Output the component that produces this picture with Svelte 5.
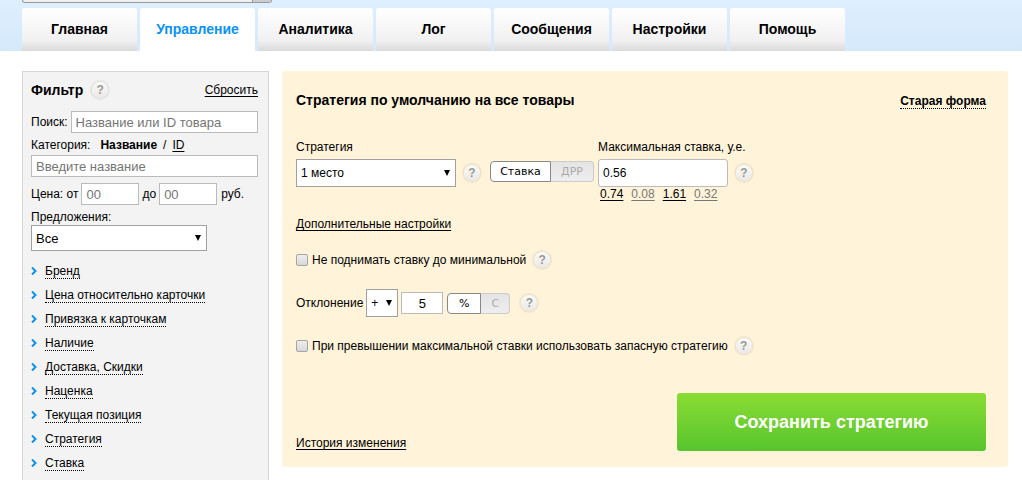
<script lang="ts">
  const tabs = ['Главная', 'Управление', 'Аналитика', 'Лог', 'Сообщения', 'Настройки', 'Помощь'];
  const sections = [
    'Бренд',
    'Цена относительно карточки',
    'Привязка к карточкам',
    'Наличие',
    'Доставка, Скидки',
    'Наценка',
    'Текущая позиция',
    'Стратегия',
    'Ставка',
  ];
  const hints = [
    { value: '0.74', muted: false },
    { value: '0.08', muted: true },
    { value: '1.61', muted: false },
    { value: '0.32', muted: true },
  ];

  let active = $state('Управление');
  let mode = $state('rate');
  let unit = $state('percent');
  let bid = $state('0.56');
  let deviation = $state('5');
</script>

{#snippet help()}
  <button class="help" type="button" aria-label="Справка">?</button>
{/snippet}

<div class="page">
  <header>
    <div class="account"><span class="account-arrow"></span></div>
    <nav>
      {#each tabs as tab}
        <a href="#top" class:active={tab === active} onclick={() => (active = tab)}>{tab}</a>
      {/each}
    </nav>
  </header>

  <div class="layout">
    <aside>
      <div class="filter-head">
        <h2>Фильтр</h2>
        {@render help()}
        <a class="reset" href="#reset">Сбросить</a>
      </div>
      <div class="row">
        <label for="search">Поиск:</label>
        <input id="search" class="grow" type="text" placeholder="Название или ID товара" />
      </div>
      <div class="category">
        <label for="category">Категория:</label>
        <b>Название</b>
        <span>/</span>
        <a href="#id">ID</a>
      </div>
      <div class="row">
        <input id="category" class="grow" type="text" placeholder="Введите название" />
      </div>
      <div class="row price">
        <label for="from">Цена: от</label>
        <input id="from" type="text" placeholder="00" />
        <label for="to">до</label>
        <input id="to" type="text" placeholder="00" />
        <span>руб.</span>
      </div>
      <label class="offers-label" for="offers">Предложения:</label>
      <span class="select offers">
        <select id="offers">
          <option>Все</option>
        </select>
      </span>
      <ul>
        {#each sections as section}
          <li>
            <svg width="6" height="8" viewBox="0 0 6 8" aria-hidden="true">
              <path d="M1 0.5 L4.5 4 L1 7.5" fill="none" stroke="#0a93f5" stroke-width="2" />
            </svg>
            <a class="dotted" href="#section">{section}</a>
          </li>
        {/each}
      </ul>
    </aside>

    <main>
      <div class="title">
        <h1>Стратегия по умолчанию на все товары</h1>
        <a class="dotted old-form" href="#old">Старая форма</a>
      </div>

      <div class="fields">
        <label class="strategy-label" for="strategy">Стратегия</label>
        <label class="bid-label" for="bid">Максимальная ставка, у.е.</label>
        <span class="select strategy">
          <select id="strategy">
            <option>1 место</option>
          </select>
        </span>
        {@render help()}
        <div class="toggle">
          <button type="button" class:on={mode === 'rate'} onclick={() => (mode = 'rate')}>Ставка</button>
          <button type="button" class:on={mode === 'share'} onclick={() => (mode = 'share')}>ДРР</button>
        </div>
        <input id="bid" class="bid" type="text" bind:value={bid} />
        {@render help()}
        <div class="hints">
          {#each hints as hint}
            <a href="#bid" class:muted={hint.muted} onclick={() => (bid = hint.value)}>{hint.value}</a>
          {/each}
        </div>
      </div>

      <div class="extra"><a href="#extra">Дополнительные настройки</a></div>

      <div class="option">
        <label><input type="checkbox" />Не поднимать ставку до минимальной</label>
        {@render help()}
      </div>

      <div class="option deviation">
        <label for="deviation">Отклонение</label>
        <span class="select sign">
          <select aria-label="Знак">
            <option>+</option>
            <option>-</option>
          </select>
        </span>
        <input id="deviation" type="text" bind:value={deviation} />
        <div class="toggle small">
          <button type="button" class:on={unit === 'percent'} onclick={() => (unit = 'percent')}>%</button>
          <button type="button" class:on={unit === 'c'} onclick={() => (unit = 'c')}>С</button>
        </div>
        {@render help()}
      </div>

      <div class="option">
        <label><input type="checkbox" />При превышении максимальной ставки использовать запасную стратегию</label>
        {@render help()}
      </div>

      <footer>
        <a href="#history">История изменения</a>
        <button class="save" type="button">Сохранить стратегию</button>
      </footer>
    </main>
  </div>
</div>

<style>
  :global(body) {
    background: #fff;
  }

  .page {
    display: flex;
    flex-direction: column;
    min-height: 100vh;
    font: 12px/16px 'Liberation Sans', Arial, sans-serif;
    color: #000;
  }

  .page :global(*) {
    box-sizing: border-box;
  }

  a {
    color: #000;
    text-underline-offset: 2px;
  }

  h1,
  h2 {
    margin: 0;
    font-size: 14px;
    line-height: 18px;
  }

  header {
    padding: 0 22px;
    background: linear-gradient(#deeffe, #d5e9fb);
  }

  .account {
    display: flex;
    justify-content: flex-end;
    width: 250px;
    height: 3px;
    margin-bottom: 5px;
    border: 1px solid #999;
    border-top: 0;
    border-radius: 0 0 3px 3px;
    background: #f0f0f0;
  }

  .account-arrow {
    width: 19px;
    border-left: 1px solid #999;
    background: #ccc;
  }

  nav {
    display: flex;
    gap: 3px;
  }

  nav a {
    width: 115px;
    border-radius: 3px 3px 0 0;
    background: linear-gradient(#fff, #f1f1f1 75%, #dadada);
    font-size: 14px;
    font-weight: bold;
    line-height: 43px;
    text-align: center;
    text-decoration: none;
  }

  nav a.active {
    background: #fff;
    color: #0a93f5;
  }

  .layout {
    display: flex;
    flex: 1;
    gap: 13px;
    padding: 20px 14px 0 22px;
  }

  aside {
    flex: none;
    width: 247px;
    padding: 8px 10px 0 8px;
    border: 1px solid #d6d6d6;
    border-bottom: 0;
    background: #f3f3f3;
  }

  .filter-head {
    display: flex;
    align-items: center;
    height: 20px;
    margin-bottom: 11px;
  }

  .filter-head h2 {
    margin-right: 7px;
  }

  .reset {
    margin-left: auto;
  }

  .row {
    display: flex;
    align-items: center;
    gap: 3px;
  }

  input,
  select {
    height: 22px;
    margin: 0;
    padding: 0 4px;
    border: 1px solid #bbb;
    border-radius: 0;
    background: #fff;
    color: #000;
    font: 13px 'Liberation Sans', Arial, sans-serif;
  }

  input::placeholder {
    color: #757575;
  }

  .grow {
    flex: 1;
    min-width: 0;
  }

  .category {
    display: flex;
    gap: 6px;
    padding-top: 2px;
    line-height: 20px;
  }

  .category label {
    margin-right: 4px;
  }

  .price {
    margin-top: 6px;
  }

  .price input {
    width: 58px;
  }

  .price span {
    margin-left: 1px;
  }

  .offers-label {
    display: block;
    padding-top: 4px;
  }

  .select {
    display: block;
    position: relative;
  }

  .select::after {
    content: '';
    position: absolute;
    top: 50%;
    right: 6px;
    margin-top: -3px;
    border: 3px solid transparent;
    border-top: 6px solid #000;
    border-bottom: 0;
    pointer-events: none;
  }

  .select select {
    appearance: none;
    width: 100%;
    height: 28px;
    border-color: #a0a0a0;
  }

  .offers {
    width: 176px;
  }

  .offers select {
    height: 26px;
  }

  ul {
    margin: 8px 0 0;
    padding: 0;
    list-style: none;
  }

  li {
    display: flex;
    align-items: center;
    gap: 8px;
    height: 24px;
  }

  .dotted {
    border-bottom: 1px dotted #000;
    line-height: 14px;
    text-decoration: none;
  }

  .help {
    flex: none;
    width: 20px;
    height: 20px;
    padding: 0;
    border: 2px solid rgba(0, 0, 0, 0.06);
    border-radius: 50%;
    background: linear-gradient(#fafaf8, #ebe9e5);
    background-clip: padding-box;
    color: #999;
    font: bold 12px/16px 'Liberation Sans', Arial, sans-serif;
  }

  main {
    flex: 1;
    align-self: flex-start;
    padding: 20px 22px 16px 14px;
    border-radius: 3px;
    background: #fff3d9;
  }

  .title {
    display: flex;
    align-items: flex-end;
    justify-content: space-between;
    margin-bottom: 30px;
  }

  .old-form {
    font-weight: bold;
  }

  .fields {
    display: grid;
    grid-template-columns: 160px auto auto 130px auto;
    grid-template-rows: 20px 28px auto;
    justify-content: start;
    align-items: center;
    margin-bottom: 14px;
  }

  .fields label {
    align-self: start;
  }

  .bid-label {
    grid-column: 4 / 6;
  }

  .strategy select {
    font-size: 12px;
  }

  .fields .strategy {
    grid-column: 1;
  }

  .fields :global(.help) {
    margin: 0 8px 0 6px;
  }

  .bid {
    height: 28px;
    border-radius: 3px;
    font-size: 12px;
  }

  .hints {
    display: flex;
    grid-column: 4;
    gap: 8px;
    padding-left: 2px;
    line-height: 15px;
  }

  .muted {
    color: #777;
  }

  .toggle {
    display: flex;
    width: 104px;
    margin-right: 4px;
  }

  .fields .toggle {
    margin-bottom: 4px;
  }

  .toggle button {
    flex: 1;
    height: 21px;
    padding: 0;
    border: 1px solid #ccc;
    border-left: 0;
    border-radius: 0 4px 4px 0;
    background: linear-gradient(#e4e4e4, #eee);
    color: #aaa;
    font: 11px 'DejaVu Sans', Verdana, sans-serif;
  }

  .toggle button:first-child {
    flex: none;
    width: 61px;
    border-left: 1px solid #ccc;
    border-radius: 4px 0 0 4px;
  }

  .toggle button.on {
    border-color: #888;
    background: #fff;
    color: #000;
  }

  .toggle.small {
    width: 63px;
    margin-right: 3px;
  }

  .toggle.small button:first-child {
    width: 34px;
  }

  .extra {
    margin-bottom: 18px;
  }

  .option {
    display: flex;
    align-items: center;
    gap: 6px;
    margin-bottom: 19px;
  }

  .option label {
    display: flex;
    align-items: center;
    gap: 4px;
  }

  .deviation {
    gap: 3px;
  }

  .deviation input {
    width: 42px;
    text-align: center;
  }

  .deviation .toggle {
    margin: 0 6px 0 1px;
  }

  .sign {
    width: 32px;
  }

  .sign select {
    font-size: 12px;
  }

  input[type='checkbox'] {
    appearance: none;
    width: 12px;
    height: 12px;
    padding: 0;
    border: 1px solid #a5a5a5;
    border-radius: 2px;
    background: linear-gradient(#eee, #d8d8d8);
  }

  input[type='checkbox']:checked {
    background: #0a93f5;
  }

  footer {
    display: flex;
    align-items: flex-end;
    justify-content: space-between;
    padding-top: 18px;
  }

  .save {
    width: 309px;
    height: 58px;
    border: 0;
    border-radius: 3px;
    background: linear-gradient(#8bdc34, #57c52d);
    color: #fff;
    font: bold 18px 'Liberation Sans', Arial, sans-serif;
  }
</style>
